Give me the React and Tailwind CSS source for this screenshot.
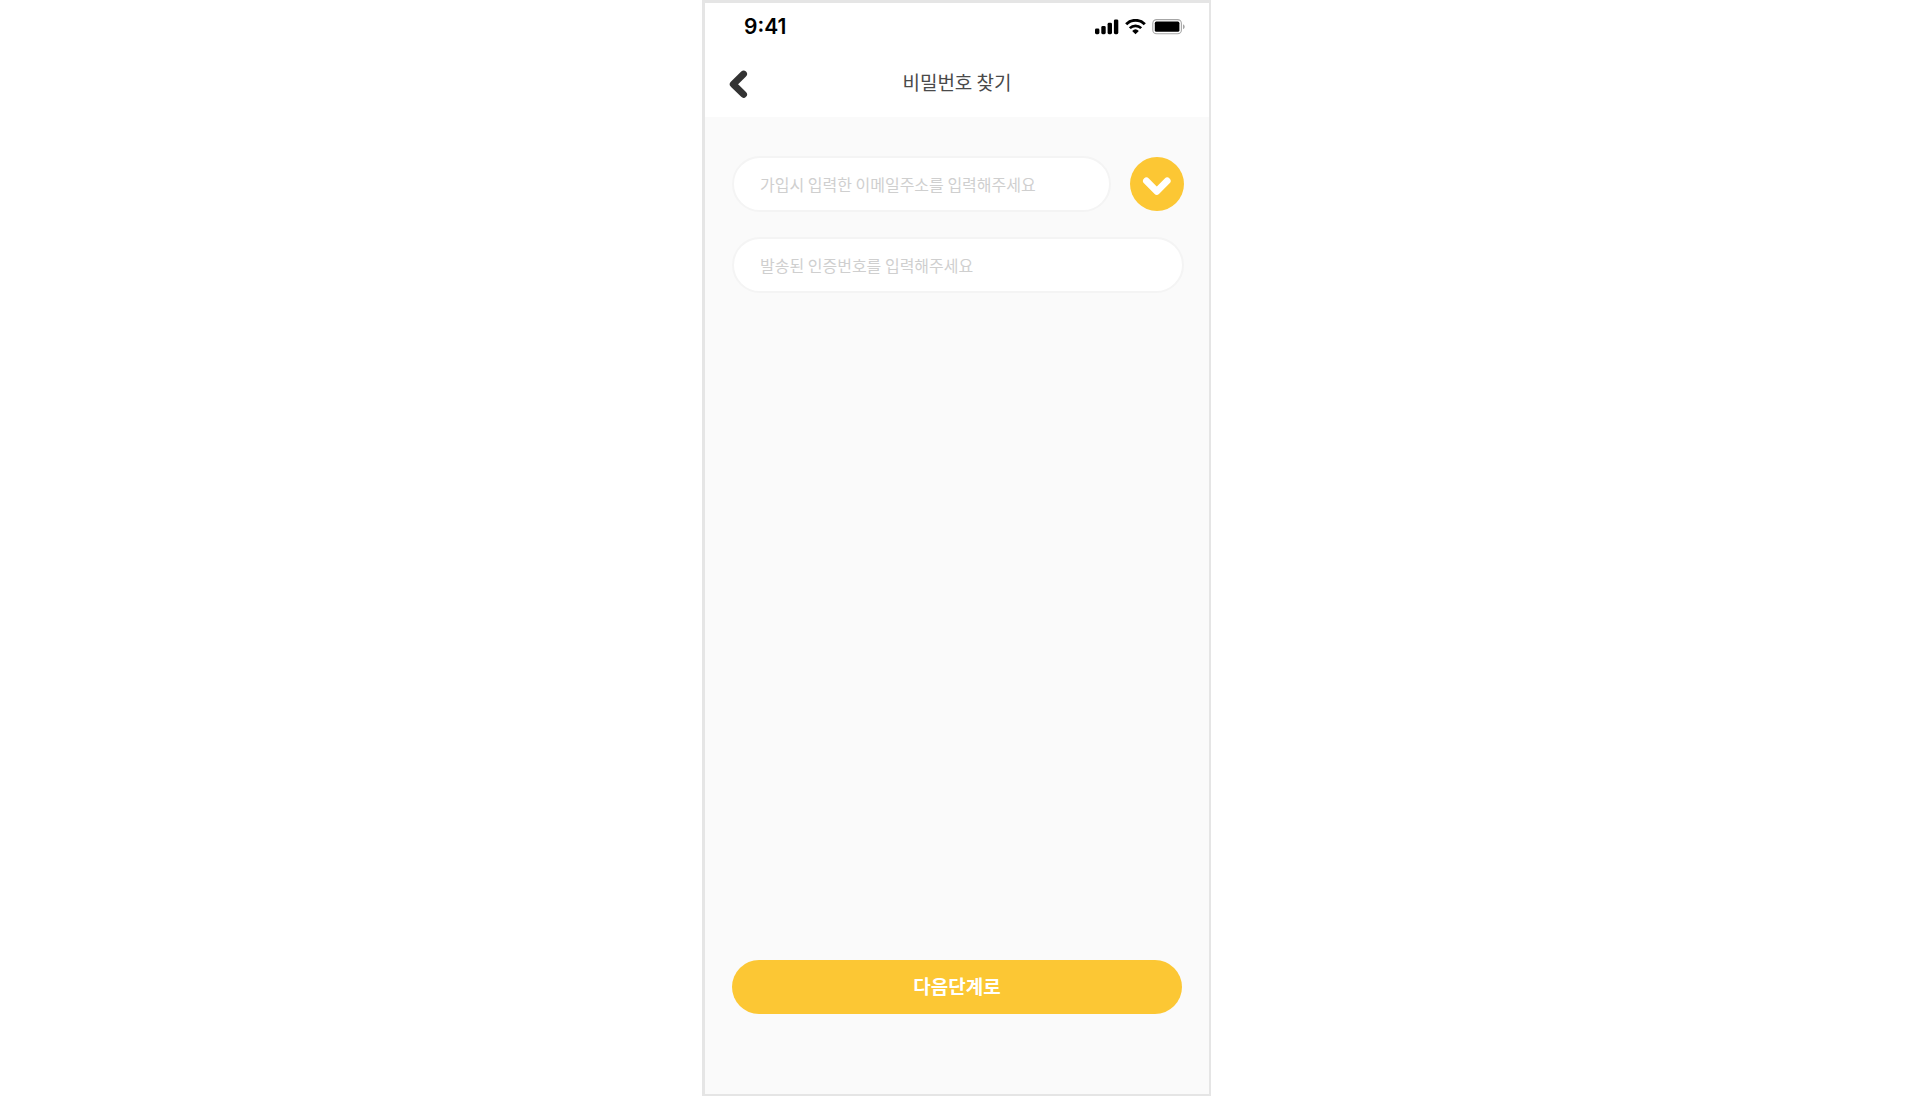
function StatusIcons() {
  return (
    <div className="flex items-center gap-[6px] text-black">
      <svg width="24" height="16" viewBox="0 0 24 16" fill="currentColor" aria-hidden="true">
        <rect x="0" y="9.6" width="4.4" height="5.6" rx="1.4" />
        <rect x="6.3" y="7" width="4.4" height="8.2" rx="1.4" />
        <rect x="12.6" y="3.8" width="4.4" height="11.4" rx="1.4" />
        <rect x="18.9" y="0.4" width="4.4" height="14.8" rx="1.4" />
      </svg>
      <svg width="21" height="16" viewBox="0 0 21 16" aria-hidden="true">
        <path d="M1.2 5.2a13.2 13.2 0 0 1 18.6 0" fill="none" stroke="currentColor" strokeWidth="3" />
        <path d="M4.8 9.1a8.2 8.2 0 0 1 11.4 0" fill="none" stroke="currentColor" strokeWidth="2.7" />
        <path d="M10.5 15.2 7.2 11.9a4.8 4.8 0 0 1 6.6 0Z" fill="currentColor" />
      </svg>
      <svg width="33" height="16" viewBox="0 0 33 16" aria-hidden="true">
        <rect x="0.8" y="0.6" width="28.6" height="14.2" rx="3.8" fill="none" stroke="#a6a6a6" strokeWidth="1.1" />
        <rect x="2.8" y="2.6" width="24.6" height="10.2" rx="1.6" fill="currentColor" />
        <path d="M31 5.2v5c1-.4 1.7-1.4 1.7-2.5S32 5.6 31 5.2Z" fill="#a6a6a6" />
      </svg>
    </div>
  );
}

const fieldClass =
  "h-14 w-full min-w-0 rounded-full border-2 border-[#f4f4f4] bg-white px-[26px] text-base text-[#333333] placeholder:text-[#cfcfcf] placeholder:opacity-100 outline-none focus:border-[#fcc734]";

export default function App() {
  return (
    <div className="flex min-h-screen justify-center bg-white pl-px font-['Noto_Sans_CJK_KR',sans-serif]">
      <div className="flex w-full max-w-[509px] flex-col border-t-[3px] border-r-2 border-b-2 border-l-[3px] border-[#e5e5e5] bg-[#fafafa]">
        <header className="bg-white">
          <div className="flex h-12 items-center justify-between pr-6 pl-[39px]">
            <span className="font-['Inter',sans-serif] text-[21px] font-semibold text-black">9:41</span>
            <StatusIcons />
          </div>
          <div className="grid h-[66px] grid-cols-[72px_1fr_72px] items-center pb-1">
            <button type="button" aria-label="뒤로" className="flex h-12 items-center pl-6">
              <svg width="20" height="32" viewBox="0 0 20 32" fill="none" aria-hidden="true">
                <path d="M14.6 8 4.2 18.2 14.6 28.4" stroke="#333333" strokeWidth="6.8" strokeLinecap="round" strokeLinejoin="round" />
              </svg>
            </button>
            <h1 className="text-center text-[19px] leading-7 text-[#4a4a4a]">비밀번호 찾기</h1>
          </div>
        </header>

        <form className="flex flex-1 flex-col pt-[39px] pr-[25px] pb-20 pl-[27px]" onSubmit={(e) => e.preventDefault()}>
          <div className="flex items-center gap-[19px]">
            <input type="email" aria-label="이메일주소" placeholder="가입시 입력한 이메일주소를 입력해주세요" className={fieldClass} />
            <button type="button" aria-label="인증번호 보내기" className="flex size-[54px] shrink-0 items-center justify-center rounded-full bg-[#fcc734] pt-1">
              <svg width="30" height="20" viewBox="0 0 30 20" fill="none" aria-hidden="true">
                <path d="M4.4 4.9 14.8 15.4 25.2 4.9" stroke="white" strokeWidth="6.8" strokeLinecap="round" strokeLinejoin="round" />
              </svg>
            </button>
          </div>
          <input type="text" aria-label="인증번호" placeholder="발송된 인증번호를 입력해주세요" className={`${fieldClass} mt-[25px]`} />
          <div className="mt-auto pr-[2px]">
            <button type="submit" className="block h-[54px] w-full rounded-full bg-[#fcc734] pb-[2px] text-[19px] font-bold text-white">
              다음단계로
            </button>
          </div>
        </form>
      </div>
    </div>
  );
}
